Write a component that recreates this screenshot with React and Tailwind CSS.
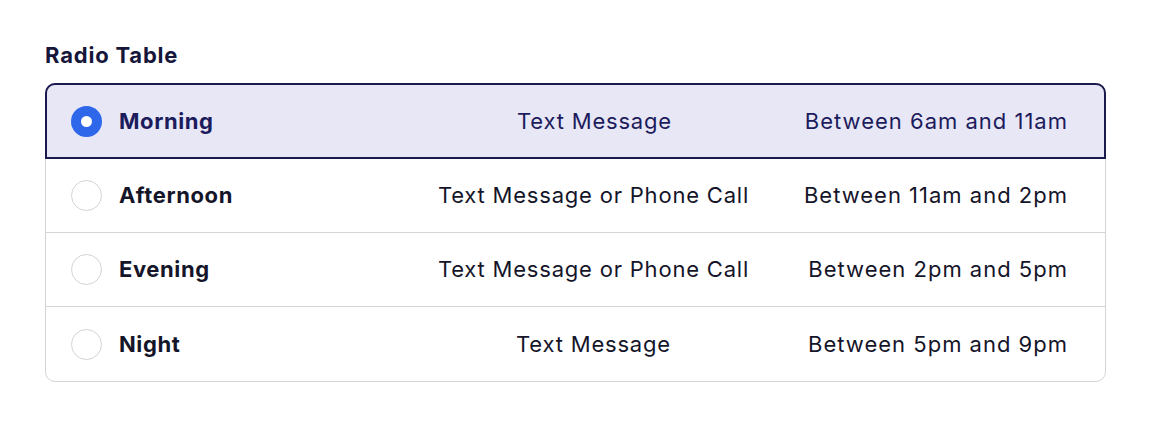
import React, { useState } from 'react';

const rows = [
  { id: 'morning', label: 'Morning', method: 'Text Message', time: 'Between 6am and 11am' },
  { id: 'afternoon', label: 'Afternoon', method: 'Text Message or Phone Call', time: 'Between 11am and 2pm' },
  { id: 'evening', label: 'Evening', method: 'Text Message or Phone Call', time: 'Between 2pm and 5pm' },
  { id: 'night', label: 'Night', method: 'Text Message', time: 'Between 5pm and 9pm' },
];

const App = () => {
  const [selected, setSelected] = useState('morning');

  return (
    <div className="min-h-screen bg-white pl-[45px] pr-[50px] pt-[40px] font-['Inter',sans-serif]">
      <h2 className="text-[22px] font-bold text-[#16163a] tracking-[0.8px] leading-[30px] mb-[13px]">Radio Table</h2>

      <div className="border border-[#d4d4d8] rounded-[10px]">
        {rows.map((row, i) => {
          const isSel = selected === row.id;
          const isLast = i === rows.length - 1;
          return (
            <div
              key={row.id}
              onClick={() => setSelected(row.id)}
              className={`grid grid-cols-[340px_415px_1fr] items-center cursor-pointer text-[22px] tracking-[0.8px] ${
                isSel
                  ? '-mx-px -mt-px h-[76px] border-2 border-[#1b1a4f] rounded-t-[10px] bg-[#e7e7f6] text-[#1c1b5c]'
                  : `h-[74px] text-[#15152a] ${isLast ? '' : 'border-b border-[#d4d4d8]'}`
              }`}
            >
              {/* Label */}
              <div className={`flex items-center gap-[17px] ${isSel ? 'pl-[24px]' : 'pl-[25px]'}`}>
                {isSel ? (
                  <span className="w-[31px] h-[31px] rounded-full bg-[#2f67ea] flex items-center justify-center">
                    <span className="w-[11px] h-[11px] rounded-full bg-white" />
                  </span>
                ) : (
                  <span className="w-[31px] h-[31px] rounded-full border border-[#d4d4d8] bg-white" />
                )}
                <span className="font-bold tracking-[0.6px]">{row.label}</span>
              </div>

              {/* Method */}
              <div className="text-center">{row.method}</div>

              {/* Time */}
              <div className={`text-right tracking-[1px] ${isSel ? 'pr-[36px]' : 'pr-[37px]'}`}>{row.time}</div>
            </div>
          );
        })}
      </div>
    </div>
  );
};

export default App;
